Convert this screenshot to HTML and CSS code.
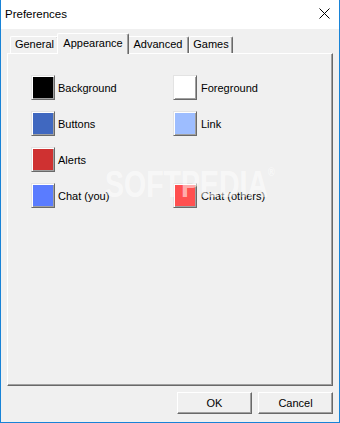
FILE: index.html
```html
<!DOCTYPE html>
<html lang="en">
<head>
    <meta charset="UTF-8">
    <meta name="viewport" content="width=device-width, initial-scale=1.0">
    <title>Preferences</title>
    <link rel="stylesheet" href="styles.css">
</head>
<body>
    <div class="window">
        <div class="titlebar">
            <span class="title">Preferences</span>
            <svg class="close" width="11" height="11" viewBox="0 0 11 11">
                <path d="M0.5 0.5 L10.5 10.5 M10.5 0.5 L0.5 10.5" stroke="#000" stroke-width="1" fill="none"/>
            </svg>
        </div>
        <div class="content">
            <div class="tabs">
                <div class="tab tab-general">General</div>
                <div class="tab tab-appearance selected">Appearance</div>
                <div class="tab tab-advanced">Advanced</div>
                <div class="tab tab-games">Games</div>
            </div>
            <div class="panel">
                <div class="colors">
                    <div class="color-item"><span class="swatch swatch-background"></span>Background</div>
                    <div class="color-item right"><span class="swatch swatch-foreground"></span>Foreground</div>
                    <div class="color-item"><span class="swatch swatch-buttons"></span>Buttons</div>
                    <div class="color-item right"><span class="swatch swatch-link"></span>Link</div>
                    <div class="color-item"><span class="swatch swatch-alerts"></span>Alerts</div>
                    <div class="color-item right"></div>
                    <div class="color-item"><span class="swatch swatch-chat-you"></span>Chat (you)</div>
                    <div class="color-item right"><span class="swatch swatch-chat-others"></span>Chat (others)</div>
                </div>
                <div class="watermark">SOFTPEDIA<span class="reg">®</span></div>
            </div>
            <div class="buttons">
                <button type="button">OK</button>
                <button type="button">Cancel</button>
            </div>
        </div>
    </div>
</body>
</html>
```

FILE: styles.css
```css
body {
    margin: 0;
    font-family: "Liberation Sans", Arial, sans-serif;
    font-size: 11px;
    color: #000;
}
.window {
    width: 340px;
    height: 423px;
    box-sizing: border-box;
    border: 1px solid #1883d7;
    border-top: none;
    background: #f0f0f0;
    display: flex;
    flex-direction: column;
}
.titlebar {
    box-sizing: border-box;
    height: 29px;
    background: #fff;
    display: flex;
    align-items: center;
    justify-content: space-between;
    padding: 0 9px 2px 4px;
}
.title {
    font-size: 11.5px;
}
.close {
    display: block;
}
.content {
    padding: 4px 6px 8px;
}
.tabs {
    display: flex;
    align-items: flex-end;
    height: 20px;
    margin-left: 3px;
}
.tab {
    box-sizing: border-box;
    height: 17px;
    line-height: 15px;
    text-align: center;
    background: #f0f0f0;
    border: 1px solid;
    border-color: #fff #696969 transparent #fff;
    border-bottom: none;
    border-radius: 2px 2px 0 0;
    box-shadow: inset -1px 0 #a0a0a0;
}
.tab-general {
    width: 49px;
}
.tab-appearance {
    width: 68px;
}
.tab-advanced {
    width: 62px;
}
.tab-games {
    width: 44px;
}
.tab.selected {
    position: relative;
    z-index: 1;
    width: 72px;
    height: 21px;
    line-height: 18px;
    margin: 0 -2px -1px;
}
.panel {
    position: relative;
    box-sizing: border-box;
    height: 333px;
    border: 1px solid;
    border-color: #fff #696969 #696969 #fff;
    box-shadow: inset -1px -1px #a0a0a0;
}
.colors {
    display: grid;
    grid-template-columns: 142px 1fr;
    grid-auto-rows: 25px;
    row-gap: 11px;
    padding: 21px 0 0 23px;
}
.color-item {
    display: flex;
    align-items: center;
    gap: 3px;
}
.color-item.right {
    gap: 4px;
}
.swatch {
    box-sizing: border-box;
    width: 24px;
    height: 25px;
    border: 1px solid;
    border-color: #e3e3e3 #696969 #696969 #e3e3e3;
    box-shadow: inset 1px 1px #fff, inset -1px -1px #a0a0a0;
}
.swatch-background { background-color: #000; }
.swatch-foreground { background-color: #fff; }
.swatch-buttons { background-color: #4068c0; }
.swatch-link { background-color: #9dbdff; }
.swatch-alerts { background-color: #cf3131; }
.swatch-chat-you { background-color: #5a7cff; }
.swatch-chat-others { background-color: #ff5050; }
.watermark {
    position: absolute;
    left: 97px;
    top: 112px;
    font-size: 37px;
    line-height: 37px;
    font-weight: bold;
    color: rgba(255, 255, 255, 0.55);
    transform: scaleX(0.77);
    transform-origin: left top;
    white-space: nowrap;
    pointer-events: none;
}
.watermark .reg {
    font-size: 12px;
    vertical-align: top;
    line-height: 12px;
}
.buttons {
    display: flex;
    justify-content: flex-end;
    gap: 6px;
    margin-top: 6px;
}
button {
    box-sizing: border-box;
    width: 75px;
    height: 22px;
    padding: 0;
    font-family: "Liberation Sans", Arial, sans-serif;
    font-size: 11px;
    color: #000;
    background: #f0f0f0;
    border: 1px solid;
    border-color: #fff #696969 #696969 #fff;
    box-shadow: inset -1px -1px #a0a0a0;
}
```
